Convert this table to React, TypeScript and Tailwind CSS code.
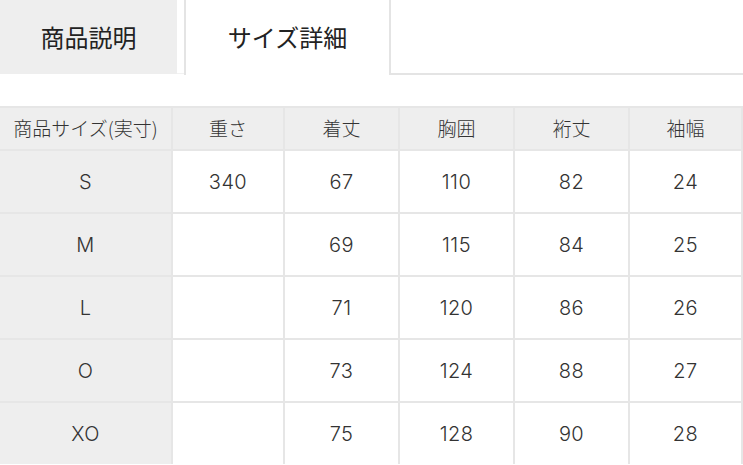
import React from "react";

const jp = { fontFamily: '"Noto Sans CJK JP", "Noto Sans", sans-serif' };
const num = { fontFamily: 'Inter, "Noto Sans CJK JP", sans-serif', letterSpacing: "0.02em" };

const headers = ["商品サイズ(実寸)", "重さ", "着丈", "胸囲", "裄丈", "袖幅"];
const rows: string[][] = [
  ["S", "340", "67", "110", "82", "24"],
  ["M", "", "69", "115", "84", "25"],
  ["L", "", "71", "120", "86", "26"],
  ["O", "", "73", "124", "88", "27"],
  ["XO", "", "75", "128", "90", "28"],
];

export default function App() {
  return (
    <div className="w-[743px] h-[465px] bg-white overflow-hidden text-[#2a2a2a]" style={jp}>
      <div className="flex h-[75px]">
        <div className="w-[177px] h-[74px] bg-[#eeeeee] flex items-center justify-center text-[24px] text-[#222]">
          商品説明
        </div>
        <div className="w-[7px] h-[74px] border-b border-[#f2f2f2]" />
        <div className="w-[205px] h-[75px] border-l-2 border-[#e4e4e4] flex items-center justify-center text-[24px] text-[#222] pb-[1px]">
          サイズ詳細
        </div>
        <div className="flex-1 h-[75px] border-l-2 border-b-2 border-[#e4e4e4]" />
      </div>
      <div
        className="mt-[31px] grid gap-[2px] pt-[2px] pr-[2px] bg-[#e6e6e6]"
        style={{ gridTemplateColumns: "171px 110px 113px 113px 113px 111px" }}
      >
        {headers.map((h) => (
          <div
            key={h}
            className="h-[41px] bg-[#eeeeee] flex items-center justify-center text-[19px] font-light text-[#333] whitespace-nowrap"
          >
            {h}
          </div>
        ))}
        {rows.map((r) =>
          r.map((c, i) => (
            <div
              key={r[0] + i}
              className={`h-[61px] flex items-center justify-center text-[20px] font-light text-[#333] ${
                i === 0 ? "bg-[#eeeeee]" : "bg-white"
              }`}
              style={num}
            >
              {c}
            </div>
          ))
        )}
      </div>
    </div>
  );
}
